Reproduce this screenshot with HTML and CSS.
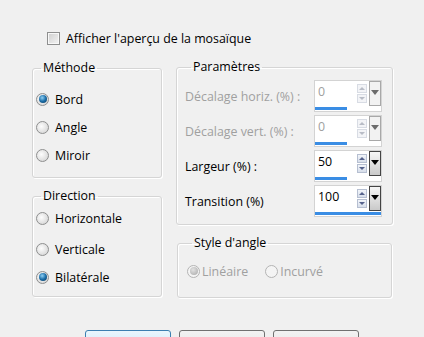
FILE: index.html
```html
<!DOCTYPE html>
<html>
	<head>
		<meta charset="utf-8" />
		<title>Mosaïque</title>
		<link rel="stylesheet" href="styles.css">
	</head>
	<body>
		<div class="dialog">
			<label class="preview"><span class="check"></span>Afficher l'aperçu de la mosaïque</label>

			<div class="columns">
				<div class="col col-left">
					<fieldset class="group method">
						<legend>Méthode</legend>
						<label class="radio"><span class="dot on"></span>Bord</label>
						<label class="radio"><span class="dot"></span>Angle</label>
						<label class="radio"><span class="dot"></span>Miroir</label>
					</fieldset>

					<fieldset class="group direction">
						<legend>Direction</legend>
						<label class="radio"><span class="dot"></span>Horizontale</label>
						<label class="radio gap"><span class="dot"></span>Verticale</label>
						<label class="radio"><span class="dot on"></span>Bilatérale</label>
					</fieldset>
				</div>

				<div class="col col-right">
					<fieldset class="group params">
						<legend>Paramètres</legend>
						<div class="param disabled">
							<span class="param-label">Décalage horiz. (%) :</span>
							<div class="spin">
								<div class="spin-main">
									<span class="spin-value">0</span>
									<span class="arrows"><i class="up"></i><i class="down"></i></span>
									<span class="drop"></span>
								</div>
								<div class="bar" style="width: 49%"></div>
							</div>
						</div>
						<div class="param disabled">
							<span class="param-label">Décalage vert. (%) :</span>
							<div class="spin">
								<div class="spin-main">
									<span class="spin-value">0</span>
									<span class="arrows"><i class="up"></i><i class="down"></i></span>
									<span class="drop"></span>
								</div>
								<div class="bar" style="width: 49%"></div>
							</div>
						</div>
						<div class="param">
							<span class="param-label">Largeur (%) :</span>
							<div class="spin">
								<div class="spin-main">
									<span class="spin-value">50</span>
									<span class="arrows"><i class="up"></i><i class="down"></i></span>
									<span class="drop"></span>
								</div>
								<div class="bar" style="width: 49%"></div>
							</div>
						</div>
						<div class="param">
							<span class="param-label">Transition (%)</span>
							<div class="spin">
								<div class="spin-main">
									<span class="spin-value">100</span>
									<span class="arrows"><i class="up"></i><i class="down"></i></span>
									<span class="drop"></span>
								</div>
								<div class="bar" style="width: 100%"></div>
							</div>
						</div>
					</fieldset>

					<fieldset class="group corner">
						<legend>Style d'angle</legend>
						<div class="corner-row">
							<label class="radio disabled"><span class="dot on"></span>Linéaire</label>
							<label class="radio disabled"><span class="dot"></span>Incurvé</label>
						</div>
					</fieldset>
				</div>
			</div>

			<div class="buttons">
				<button class="btn default" aria-label="OK"></button>
				<button class="btn" aria-label="Annuler"></button>
				<button class="btn" aria-label="Aide"></button>
			</div>
		</div>
	</body>
</html>
```

FILE: styles.css
```css
html, body {
	margin: 0;
	padding: 0;
	background: #f0f0f0;
	overflow: hidden;
}
body {
	font-family: 'Open Sans', 'Noto Sans', sans-serif;
	font-size: 12.4px;
	color: #000;
}
.dialog { padding-top: 30px; }

/* checkbox row */
.preview {
	display: flex;
	align-items: center;
	height: 17px;
	padding-left: 47px;
}
.check {
	width: 11px; height: 11px;
	border: 1px solid #8e8f8f;
	background: linear-gradient(135deg, #cfcfcf, #f4f4f4);
	box-shadow: inset 0 0 0 1px #f8f8f8;
	margin-right: 6px;
}

.columns {
	display: flex;
	align-items: flex-start;
	gap: 14px;
	padding-left: 32px;
	margin-top: 13px;
}
.col { display: flex; flex-direction: column; }
.col-left { width: 130px; }
.col-right { width: 217px; }

/* group boxes */
.group {
	margin: 0;
	padding: 0;
	min-width: 0;
	border: 1px solid #d5d5d5;
	border-radius: 3px;
	box-shadow: inset 1px 1px 0 #fff, 1px 1px 0 #fff;
}
.group legend {
	line-height: 14px;
	padding: 0 2px;
	margin-left: 5px;
}

.method { margin-top: 1px; padding: 10px 0 8px 3px; }
.direction { margin-top: 11px; padding: 1px 0 5px 3px; }
.direction .gap { margin-top: 3px; }

.params { padding: 6px 10px 7px 8px; }
.params legend { margin-left: 6px; }
.corner { margin: 11px 1px 0; padding: 11px 0 16px 9px; }

/* radios */
.radio {
	display: flex;
	align-items: center;
	height: 28px;
}
.dot {
	box-sizing: border-box;
	width: 13px; height: 13px;
	border-radius: 50%;
	border: 1px solid #8e8f8f;
	background: radial-gradient(circle at 40% 40%, #fdfdfd, #dcdcdc 70%, #c4c4c4);
	margin-right: 6px;
	display: flex;
	align-items: center;
	justify-content: center;
}
.dot.on::after {
	content: '';
	width: 8px; height: 8px;
	border-radius: 50%;
	background: radial-gradient(circle at 40% 35%, #8fd0f4, #1c6ea8 50%, #0a3558);
}
.radio.disabled { color: #a0a0a0; height: 20px; }
.radio.disabled .dot { border-color: #b4b4b4; background: #f4f4f4; margin-right: 2px; }
.radio.disabled .dot.on::after { background: radial-gradient(circle at 40% 35%, #e2e2e2, #a8a8a8); }
.corner-row { display: flex; gap: 17px; }

/* parameter rows */
.param {
	display: flex;
	align-items: center;
	justify-content: space-between;
	height: 32px;
	margin-bottom: 3px;
}
.param:last-child { margin-bottom: 0; }
.param.disabled .param-label { color: #a0a0a0; }

.spin {
	box-sizing: border-box;
	width: 68px; height: 32px;
	background: #fff;
	border: 1px solid #d3d3d3;
	display: flex;
	flex-direction: column;
}
.spin-main {
	display: flex;
	height: 25px;
}
.spin-value {
	flex: 1;
	padding: 3px 0 0 3px;
	line-height: 16px;
}
.param.disabled .spin-value { color: #a0a0a0; }
.arrows {
	display: flex;
	flex-direction: column;
	gap: 1px;
	width: 10px;
	margin: 3px 2px 0 0;
}
.arrows i {
	display: flex;
	align-items: center;
	justify-content: center;
	height: 9px;
	border: 1px solid #b6bfd1;
	box-sizing: border-box;
	background: linear-gradient(#f2f5fa, #d7deea);
}
.arrows i::after {
	content: '';
	border-left: 3px solid transparent;
	border-right: 3px solid transparent;
}
.arrows .up::after { border-bottom: 3px solid #55628c; }
.arrows .down::after { border-top: 3px solid #55628c; }
.param.disabled .arrows i { border-color: #d8dce4; background: #f3f4f7; }
.param.disabled .arrows .up::after { border-bottom-color: #b8bcc6; }
.param.disabled .arrows .down::after { border-top-color: #b8bcc6; }

.drop {
	box-sizing: border-box;
	width: 12px;
	height: 25px;
	border: 1px solid #444;
	background: linear-gradient(#f6f6f6, #c9c9c9);
	display: flex;
	justify-content: center;
	padding-top: 8px;
}
.drop::after {
	content: '';
	height: 0;
	border-left: 4px solid transparent;
	border-right: 4px solid transparent;
	border-top: 5px solid #000;
}
.param.disabled .drop { border-color: #a8a8a8; background: #f2f2f2; }
.param.disabled .drop::after { border-top-color: #6c6c6c; }

.bar {
	height: 3px;
	margin-top: 1px;
	background: #3a8de4;
}

/* buttons */
.buttons {
	display: flex;
	gap: 8px;
	padding-left: 85px;
	margin-top: 32px;
}
.btn {
	width: 86px;
	height: 23px;
	font: inherit;
	border: 1px solid #707070;
	border-radius: 3px;
	background: linear-gradient(#f2f2f2, #ebebeb 50%, #dddddd 51%, #cfcfcf);
}
.btn.default {
	border-color: #3c7fb1;
	background: linear-gradient(#eaf6fd, #d9f0fc 50%, #bee6fd 51%, #a7d9f5);
}
```
